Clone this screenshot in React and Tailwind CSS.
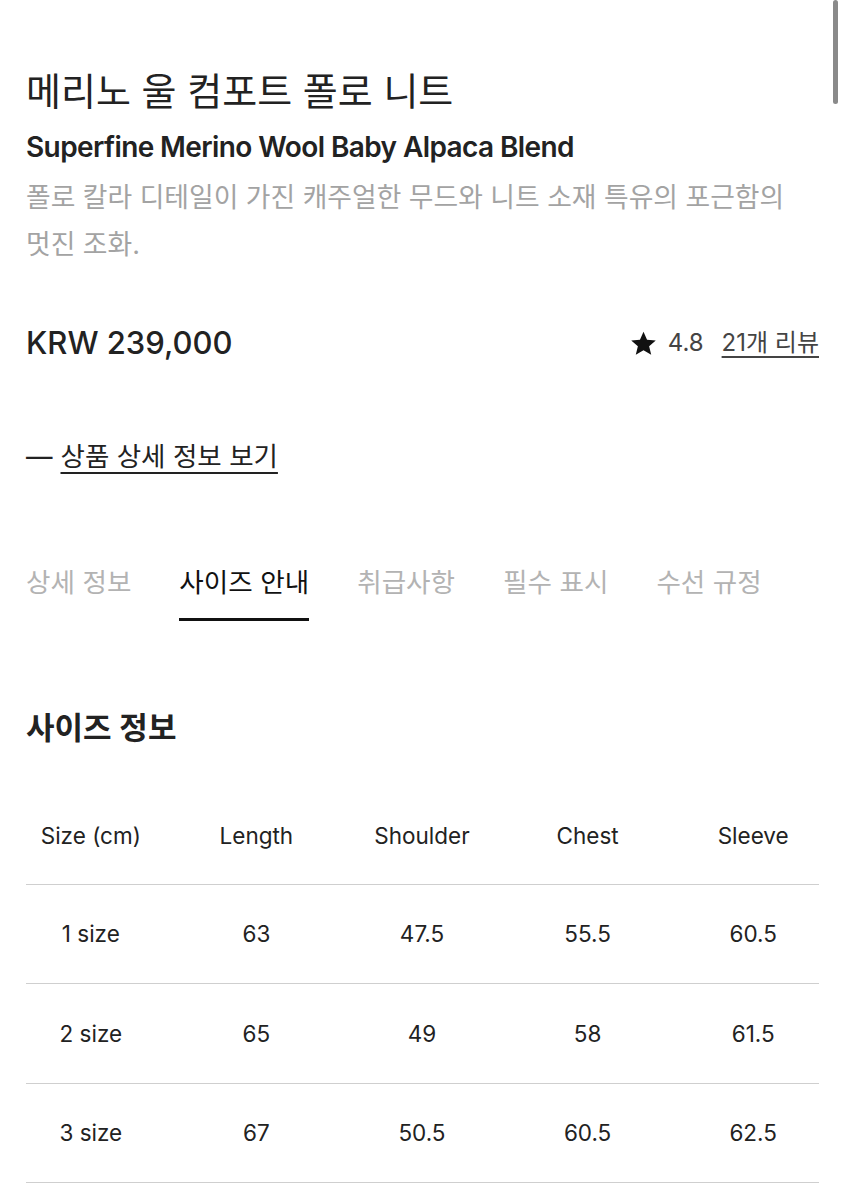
import React from "react";

const font = { fontFamily: '"Inter", "Noto Sans CJK KR", sans-serif' };

function Star() {
  return (
    <svg width="27" height="27" viewBox="0 0 24 24" className="shrink-0">
      <path d="M12 1.5l3.15 7.2 7.75.6-5.9 5.05 1.85 7.65L12 17.9l-6.85 4.1 1.85-7.65-5.9-5.05 7.75-.6z" fill="#111" />
    </svg>
  );
}

const rows = [
  ["1 size", "63", "47.5", "55.5", "60.5"],
  ["2 size", "65", "49", "58", "61.5"],
  ["3 size", "67", "50.5", "60.5", "62.5"],
];

export default function App() {
  return (
    <div className="relative min-h-[1200px] w-[845px] bg-white text-[#222]" style={font}>
      <div className="absolute right-[7px] top-0 h-[104px] w-[5px] rounded-full bg-[#8a8a8a]" />
      <div className="px-[26px] pt-[64px]">
        <h1 className="text-[38px] leading-[54px] font-normal">메리노 울 컴포트 폴로 니트</h1>
        <div className="mt-[12px] text-[28px] leading-[34px] font-semibold tracking-[-0.6px]">Superfine Merino Wool Baby Alpaca Blend</div>
        <p className="mt-[10px] text-[26.8px] leading-[47px] text-[#a3a3a3]">
          폴로 칼라 디테일이 가진 캐주얼한 무드와 니트 소재 특유의 포근함의
          <br />
          멋진 조화.
        </p>
        <div className="mt-[53px] flex h-[44px] items-center justify-between">
          <div className="text-[31px] leading-[44px] font-medium">KRW 239,000</div>
          <div className="flex items-center text-[24px] text-[#444]">
            <Star />
            <span className="ml-[11px]">4.8</span>
            <span className="ml-[18px] underline underline-offset-[5px] decoration-[1.5px]">21개 리뷰</span>
          </div>
        </div>
        <div className="mt-[71px] flex items-center text-[26.5px] leading-[40px]">
          <span className="mr-[8px]">—</span>
          <span className="underline underline-offset-[6px] decoration-[2px]">상품 상세 정보 보기</span>
        </div>
        <div className="mt-[86px] flex gap-[48px] text-[26.6px] leading-[40px]">
          <div className="pb-[19px] text-[#b3b3b3]">상세 정보</div>
          <div className="border-b-[3px] border-[#111] pb-[16px] text-[#111]">사이즈 안내</div>
          <div className="pb-[19px] text-[#b3b3b3]">취급사항</div>
          <div className="pb-[19px] text-[#b3b3b3]">필수 표시</div>
          <div className="pb-[19px] text-[#b3b3b3]">수선 규정</div>
        </div>
        <h2 className="mt-[87px] text-[31px] leading-[40px] font-semibold">사이즈 정보</h2>
        <div className="mt-[40px] text-[22.5px]">
          <div className="-ml-[18px] grid h-[96px] w-[828px] grid-cols-5 items-center text-center">
            <div>Size (cm)</div>
            <div>Length</div>
            <div>Shoulder</div>
            <div>Chest</div>
            <div>Sleeve</div>
          </div>
          {rows.map((r) => (
            <div key={r[0]} className="border-t border-[#cfcfcf]">
              <div className="-ml-[18px] grid h-[98.3px] w-[828px] grid-cols-5 items-center text-center">
                {r.map((c, i) => (
                  <div key={i}>{c}</div>
                ))}
              </div>
            </div>
          ))}
          <div className="border-t border-[#cfcfcf]" />
        </div>
      </div>
    </div>
  );
}
